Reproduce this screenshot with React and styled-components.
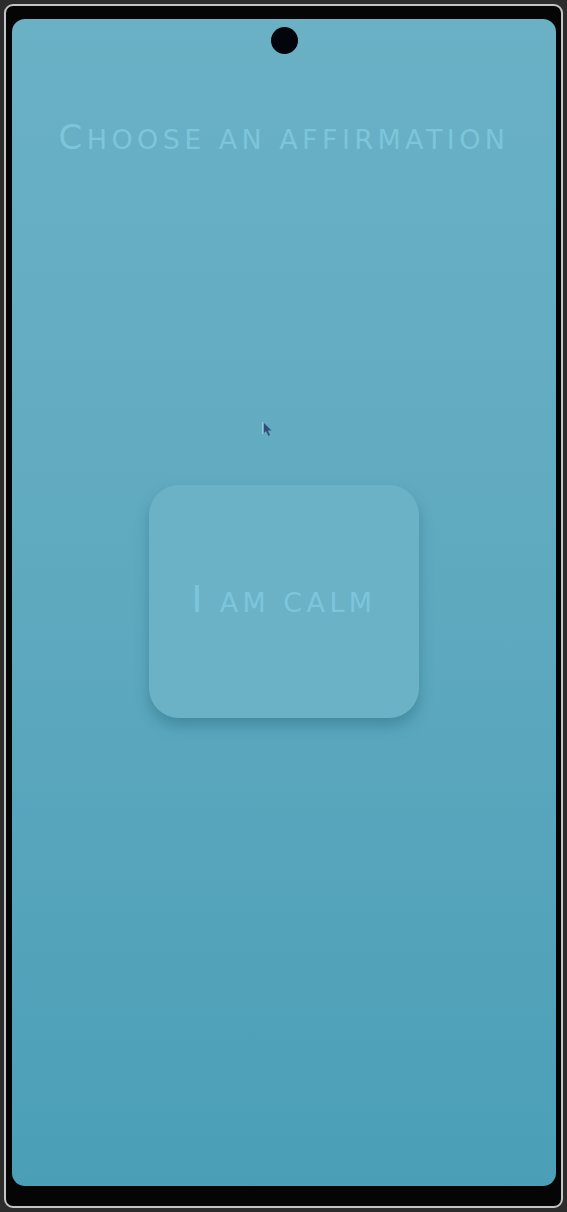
import React from "react";
import styled, { createGlobalStyle } from "styled-components";

const GlobalStyle = createGlobalStyle`
  html, body {
    margin: 0;
    padding: 0;
    background: #2c2c2c;
  }
  body {
    font-family: "DejaVu Sans", "Liberation Sans", sans-serif;
  }
`;

const Page = styled.div`
  width: 567px;
  height: 1212px;
  padding: 4px;
  box-sizing: border-box;
`;

const Frame = styled.div`
  height: 100%;
  box-sizing: border-box;
  border: 2px solid #c4c4c4;
  border-radius: 9px;
  background: #050505;
  padding: 13px 5px 20px 6px;
  display: flex;
`;

const Screen = styled.div`
  position: relative;
  flex: 1;
  border-radius: 13px;
  background: linear-gradient(180deg, #6ab1c6 0%, #5fa9bf 50%, #4a9fb7 100%);
  display: flex;
  flex-direction: column;
  align-items: center;
`;

const Camera = styled.div`
  width: 27px;
  height: 27px;
  border-radius: 50%;
  background: #02060c;
  margin-top: 8px;
`;

const Caps = styled.div`
  color: #7cc5db;
  text-transform: uppercase;
  font-size: ${(p) => p.$size}px;
  letter-spacing: ${(p) => p.$spacing}px;
  line-height: 1;
  white-space: nowrap;
`;

const Big = styled.span`
  font-size: ${(p) => p.$size}px;
`;

const Title = styled(Caps)`
  margin-top: 66px;
`;

const Card = styled.div`
  margin-top: 331px;
  width: 270px;
  height: 233px;
  border-radius: 30px;
  background: #6bb2c7;
  box-shadow: 0 8px 14px rgba(25, 85, 105, 0.35);
  display: flex;
  align-items: center;
  justify-content: center;
  padding-bottom: 4px;
  box-sizing: border-box;
`;

const Pointer = styled.svg`
  position: absolute;
  left: 250px;
  top: 402px;
`;

export default function App() {
  return (
    <Page>
      <GlobalStyle />
      <Frame>
        <Screen>
          <Camera />
          <Title $size={27} $spacing={4.4}>
            <Big $size={34}>C</Big>hoose an affirmation
          </Title>
          <Pointer width="10" height="16" viewBox="0 0 10 16">
            <path d="M1 1 L1 13 L4 10 L6.5 15 L8 14 L5.8 9.5 L9.5 9.5 Z" fill="#2f4f7a" />
            <path d="M1 1 L1 13" stroke="#b9dbe6" strokeWidth="1.2" />
          </Pointer>
          <Card>
            <Caps $size={27} $spacing={4.4}>
              <Big $size={37}>I</Big> am calm
            </Caps>
          </Card>
        </Screen>
      </Frame>
    </Page>
  );
}
